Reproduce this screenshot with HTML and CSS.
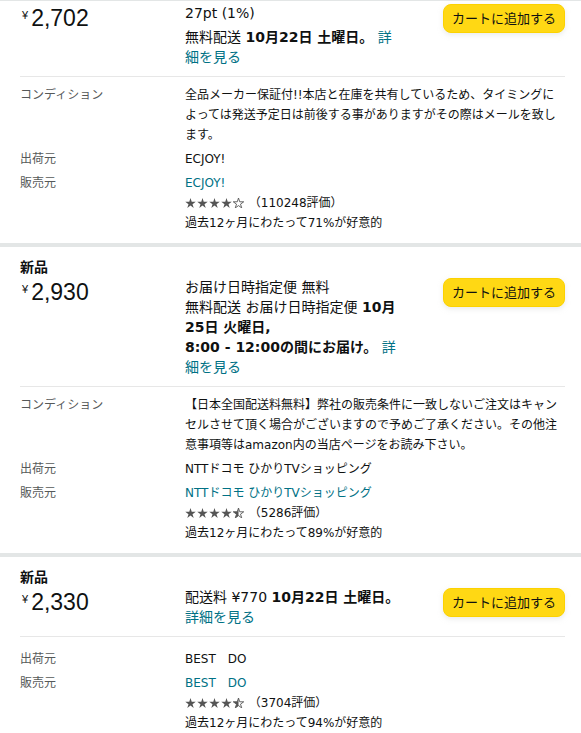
FILE: index.html
```html
<!DOCTYPE html>
<html lang="ja">
<head>
<meta charset="utf-8">
<title>出品一覧</title>
<link rel="stylesheet" href="styles.css">
</head>
<body>
<svg class="svg-defs" aria-hidden="true">
  <defs>
    <polygon id="star" points="5.5,0 6.73,3.8 10.73,3.8 7.5,6.15 8.73,9.95 5.5,7.6 2.27,9.95 3.5,6.15 0.27,3.8 4.27,3.8"/>
    <clipPath id="half-clip"><rect x="0" y="0" width="5.5" height="10"/></clipPath>
  </defs>
</svg>

<section class="offer offer--clipped">
  <div class="offer-main">
    <div class="price-col">
      <div class="price"><span class="price-symbol">¥</span><span class="price-whole">2,702</span></div>
    </div>
    <div class="delivery">
      <div class="points">27pt (1%)</div>
      <div>無料配送 <b>10月22日 土曜日。</b> <a href="#">詳細を見る</a></div>
    </div>
    <button class="add-to-cart" type="button">カートに追加する</button>
  </div>
  <hr class="divider">
  <dl class="details">
    <dt>コンディション</dt>
    <dd>全品メーカー保証付!!本店と在庫を共有しているため、タイミングによっては発送予定日は前後する事がありますがその際はメールを致します。</dd>
    <dt>出荷元</dt>
    <dd>ECJOY!</dd>
    <dt>販売元</dt>
    <dd>
      <a href="#">ECJOY!</a>
      <div class="rating"><svg class="stars" width="60" height="10" viewBox="0 0 60 10"><use href="#star" fill="#555"/><use href="#star" x="12" fill="#555"/><use href="#star" x="24" fill="#555"/><use href="#star" x="36" fill="#555"/><g transform="translate(48 0)"><use href="#star" fill="#fff" stroke="#555" stroke-width="0.9"/></g></svg> （110248評価）</div>
      <div>過去12ヶ月にわたって71%が好意的</div>
    </dd>
  </dl>
</section>

<section class="offer">
  <div class="offer-condition-title">新品</div>
  <div class="offer-main">
    <div class="price-col">
      <div class="price"><span class="price-symbol">¥</span><span class="price-whole">2,930</span></div>
    </div>
    <div class="delivery">
      <div>お届け日時指定便 無料</div>
      <div>無料配送 お届け日時指定便 <b>10月25日 火曜日,<br>8:00 - 12:00の間にお届け。</b> <a href="#">詳細を見る</a></div>
    </div>
    <button class="add-to-cart" type="button">カートに追加する</button>
  </div>
  <hr class="divider">
  <dl class="details">
    <dt>コンディション</dt>
    <dd>【日本全国配送料無料】弊社の販売条件に一致しないご注文はキャンセルさせて頂く場合がございますので予めご了承ください。その他注意事項等はamazon内の当店ページをお読み下さい。</dd>
    <dt>出荷元</dt>
    <dd>NTTドコモ ひかりTVショッピング</dd>
    <dt>販売元</dt>
    <dd>
      <a href="#">NTTドコモ ひかりTVショッピング</a>
      <div class="rating"><svg class="stars" width="60" height="10" viewBox="0 0 60 10"><use href="#star" fill="#555"/><use href="#star" x="12" fill="#555"/><use href="#star" x="24" fill="#555"/><use href="#star" x="36" fill="#555"/><g transform="translate(48 0)"><use href="#star" fill="#fff" stroke="#555" stroke-width="0.9"/><use href="#star" fill="#555" clip-path="url(#half-clip)"/></g></svg> （5286評価）</div>
      <div>過去12ヶ月にわたって89%が好意的</div>
    </dd>
  </dl>
</section>

<section class="offer">
  <div class="offer-condition-title">新品</div>
  <div class="offer-main">
    <div class="price-col">
      <div class="price"><span class="price-symbol">¥</span><span class="price-whole">2,330</span></div>
    </div>
    <div class="delivery">
      <div>配送料 ¥770 <b>10月22日 土曜日。</b> <a href="#">詳細を見る</a></div>
    </div>
    <button class="add-to-cart" type="button">カートに追加する</button>
  </div>
  <hr class="divider">
  <dl class="details details--spaced">
    <dt>出荷元</dt>
    <dd>BEST　DO</dd>
    <dt>販売元</dt>
    <dd>
      <a href="#">BEST　DO</a>
      <div class="rating"><svg class="stars" width="60" height="10" viewBox="0 0 60 10"><use href="#star" fill="#555"/><use href="#star" x="12" fill="#555"/><use href="#star" x="24" fill="#555"/><use href="#star" x="36" fill="#555"/><g transform="translate(48 0)"><use href="#star" fill="#fff" stroke="#555" stroke-width="0.9"/><use href="#star" fill="#555" clip-path="url(#half-clip)"/></g></svg> （3704評価）</div>
      <div>過去12ヶ月にわたって94%が好意的</div>
    </dd>
  </dl>
</section>
</body>
</html>
```

FILE: styles.css
```css
* {
  box-sizing: border-box;
}

html,
body {
  margin: 0;
  padding: 0;
  background: #ffffff;
}

body {
  color: #0f1111;
  font-family: "DejaVu Sans", "Noto Sans CJK JP", sans-serif;
  font-size: 14px;
  line-height: 20px;
}

.svg-defs {
  display: block;
  width: 0;
  height: 0;
  overflow: hidden;
}

a {
  color: #007185;
  text-decoration: none;
}

b {
  font-weight: 700;
}

.offer {
  padding: 10px 16px 10px 20px;
  border-top: 4px solid #e3e6e6;
}

.offer--clipped {
  padding-top: 2px;
  border-top: 1px solid #e3e6e6;
}

.offer-condition-title {
  font-weight: 700;
  font-size: 14px;
  line-height: 20px;
}

.offer-main {
  display: flex;
  align-items: flex-start;
}

.price-col {
  flex: none;
  width: 165px;
}

.price {
  display: flex;
  align-items: flex-start;
  height: 30px;
  font-family: "Liberation Sans", "Noto Sans CJK JP", sans-serif;
  color: #0f1111;
}

.price-symbol {
  font-size: 11px;
  line-height: 11px;
  margin: 7px 3px 0 2px;
}

.price-whole {
  font-size: 23px;
  line-height: 30px;
}

.delivery {
  flex: none;
  width: 218px;
}

.points {
  margin-bottom: 4px;
}

.add-to-cart {
  flex: none;
  margin-left: auto;
  margin-top: 1px;
  height: 29px;
  padding: 0 8px;
  border: 1px solid #fcd200;
  border-radius: 8px;
  background: #ffd814;
  box-shadow: 0 2px 5px 0 rgba(213, 217, 217, 0.5);
  color: #0f1111;
  font-family: "DejaVu Sans", "Noto Sans CJK JP", sans-serif;
  font-size: 13px;
  line-height: 27px;
  cursor: pointer;
}

.divider {
  height: 0;
  margin: 9px 0 0;
  border: 0;
  border-top: 1px solid #e7e7e7;
}

.details {
  display: grid;
  grid-template-columns: 165px 1fr;
  row-gap: 4px;
  margin: 0;
  padding-top: 8px;
  font-size: 12px;
  line-height: 20px;
}

.details--spaced {
  padding-top: 12px;
}

.details dt {
  color: #565959;
}

.details dd {
  margin: 0;
}

.stars {
  vertical-align: -1px;
}
```
